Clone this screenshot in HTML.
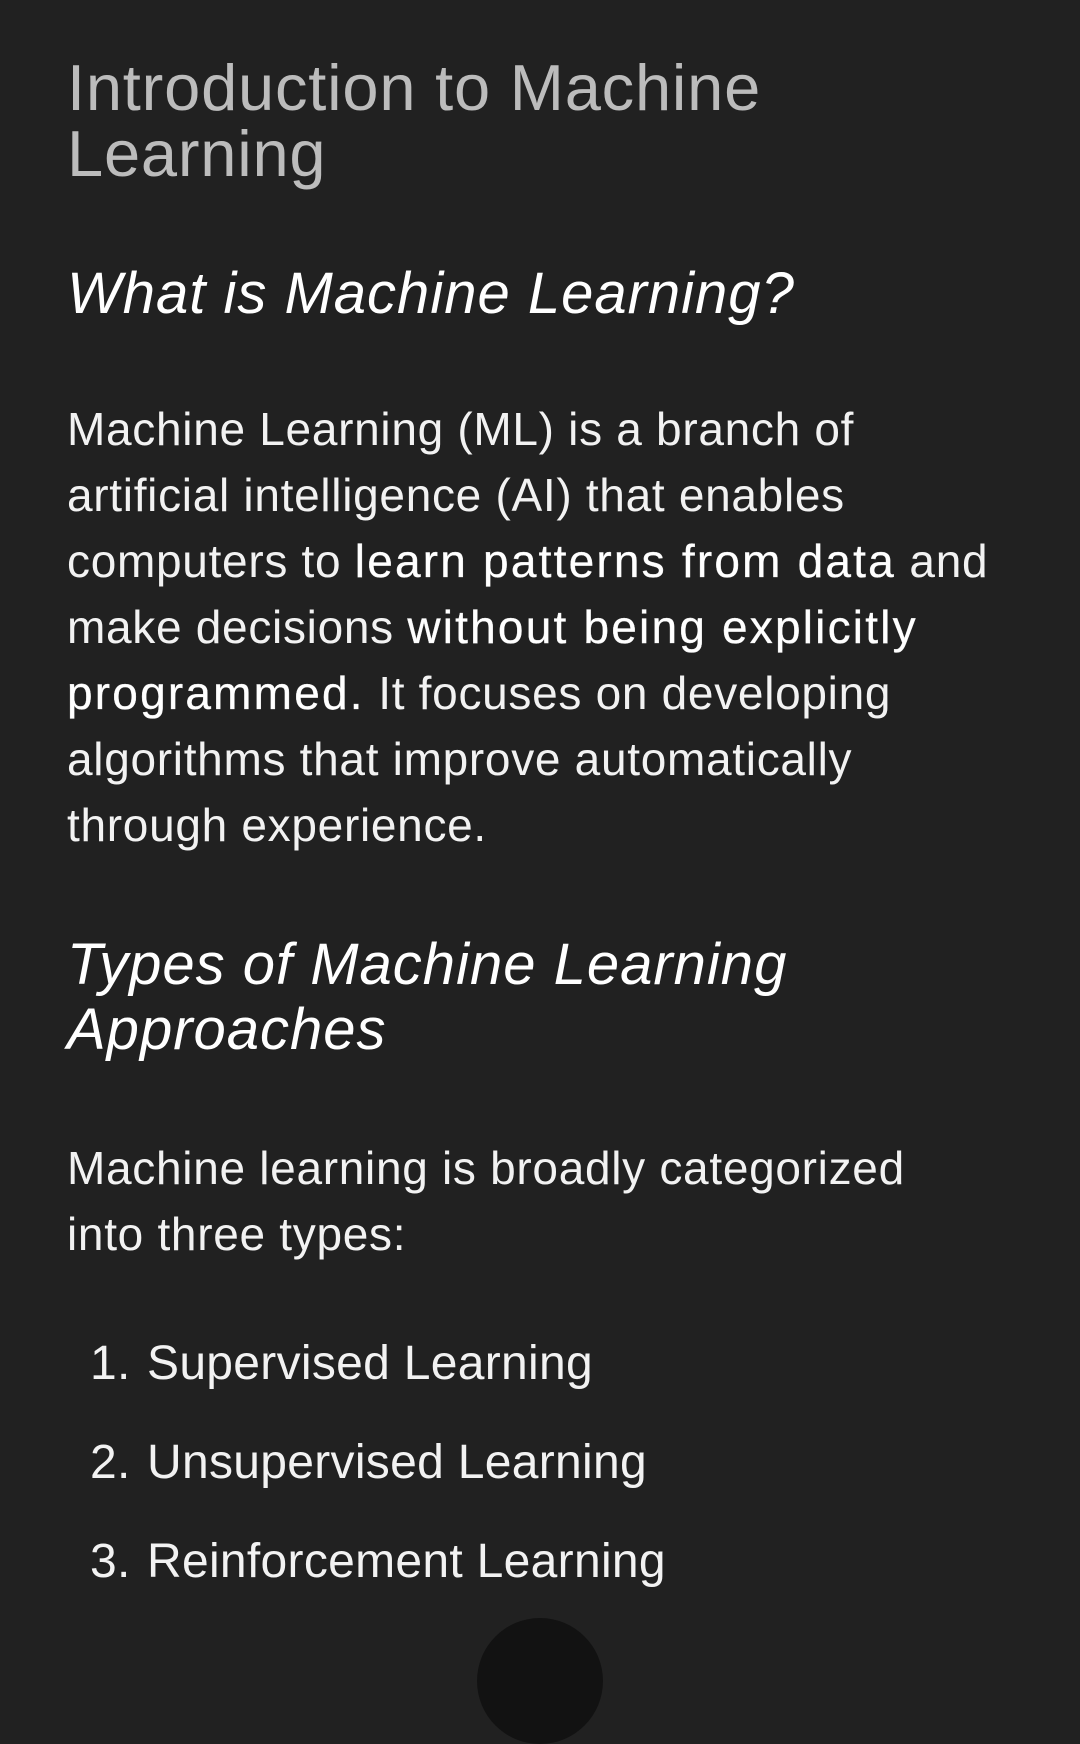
<!DOCTYPE html>
<html><head><meta charset="utf-8"><style>
html,body{margin:0;padding:0}
body{width:1080px;height:1643px;background:#212121;position:relative;overflow:hidden;font-family:"Liberation Sans",sans-serif;color:#f2f2f2}
.l{position:absolute;left:67px;line-height:1;white-space:nowrap}
.t{font-size:65px;color:#bcbcbc;letter-spacing:0.8px}
.h{font-size:58px;font-style:italic;color:#fff;letter-spacing:1px}
.p{font-size:46px;letter-spacing:0.7px}
.p b{font-weight:normal;letter-spacing:2.2px;-webkit-text-stroke:0.35px #f2f2f2;color:#fff}
.n{position:absolute;left:90px;font-size:48px;line-height:1;white-space:nowrap;letter-spacing:0.3px}
.n span{position:absolute;left:57px}
.c{position:absolute;left:477px;top:1618px;width:126px;height:126px;border-radius:50%;background:#121212}
</style></head><body>
<div class="l t" style="top:55px">Introduction to Machine</div>
<div class="l t" style="top:121px">Learning</div>
<div class="l h" style="top:265px">What is Machine Learning?</div>
<div class="l p" style="top:406px">Machine Learning (ML) is a branch of</div>
<div class="l p" style="top:472px">artificial intelligence (AI) that enables</div>
<div class="l p" style="top:538px">computers to <b>learn patterns from data</b> and</div>
<div class="l p" style="top:604px">make decisions <b>without being explicitly</b></div>
<div class="l p" style="top:670px"><b>programmed.</b> It focuses on developing</div>
<div class="l p" style="top:736px">algorithms that improve automatically</div>
<div class="l p" style="top:802px">through experience.</div>
<div class="l h" style="top:936px">Types of Machine Learning</div>
<div class="l h" style="top:1001px">Approaches</div>
<div class="l p" style="top:1145px">Machine learning is broadly categorized</div>
<div class="l p" style="top:1211px">into three types:</div>
<div class="n" style="top:1340px">1.<span>Supervised Learning</span></div>
<div class="n" style="top:1439px">2.<span>Unsupervised Learning</span></div>
<div class="n" style="top:1538px">3.<span>Reinforcement Learning</span></div>
<div class="c"></div>
</body></html>
